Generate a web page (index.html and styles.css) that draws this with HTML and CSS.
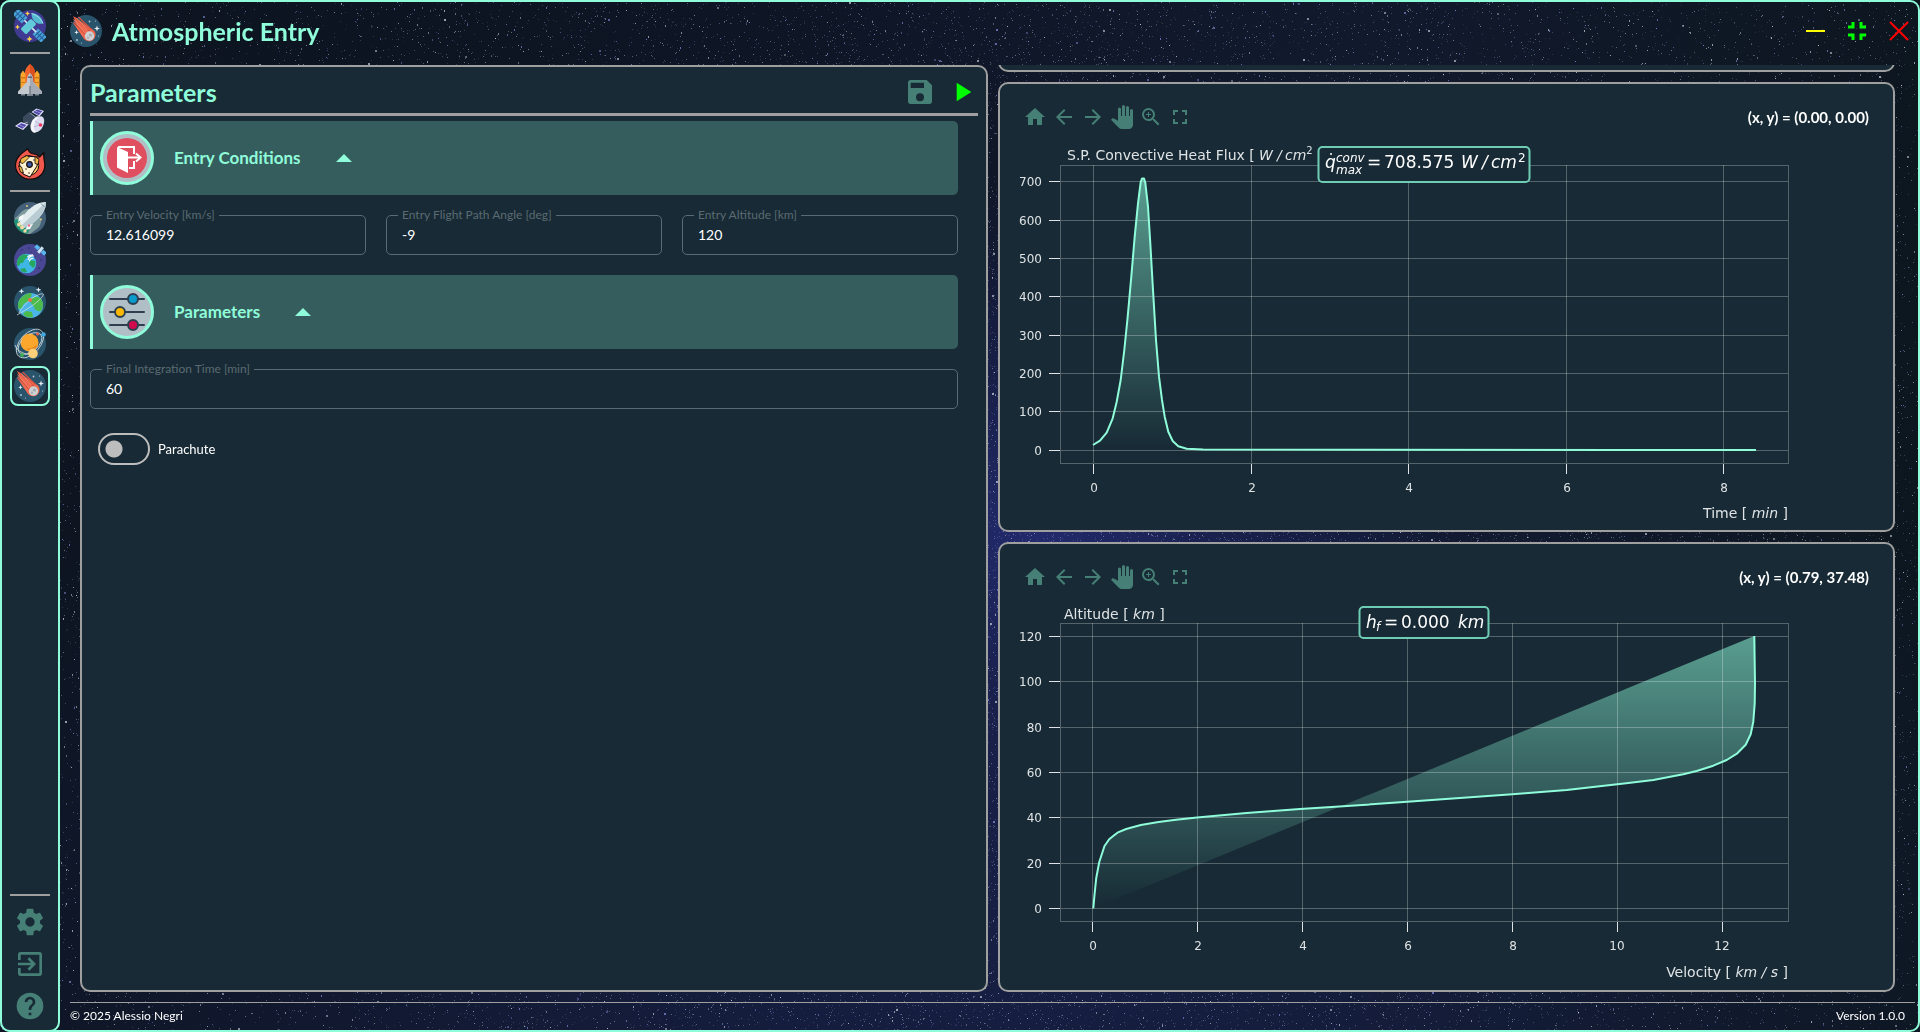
FILE: index.html
```html
<!DOCTYPE html>
<html lang="en">
<head>
<meta charset="utf-8">
<title>Atmospheric Entry</title>
<link rel="stylesheet" href="styles.css">
</head>
<body>
<canvas class="starfield" aria-hidden="true"></canvas>

<svg class="sprite" aria-hidden="true">
  <symbol id="i-comet" viewBox="0 0 32 32">
    <circle cx="16" cy="16" r="16" fill="#2a546c"/>
    <path d="M3 1 24 15.500a6.500 6.500 0 1 1-10 8.500L2.500 7l5.500 5Z" fill="#ef6a50"/>
    <path d="m5 2.500 15 14M8.500 2l13 12.500M4 7l12 13" stroke="#d4513e" stroke-width="1.200" fill="none"/>
    <path d="m6.500 3 11 12M3.500 4.500 15 18" stroke="#f98f73" stroke-width=".8" fill="none"/>
    <circle cx="19.500" cy="21" r="4.700" fill="#ccd0d3"/>
    <circle cx="20.500" cy="20" r="1.600" fill="#a6abb0"/><circle cx="18" cy="22.700" r="1.100" fill="#a6abb0"/>
    <path d="m27 10.500.8 2.200 2.200.8-2.200.8-.8 2.200-.8-2.200-2.200-.8 2.200-.8ZM6.500 15l.6 1.700 1.700.6-1.700.6-.6 1.700-.6-1.700-1.700-.6 1.700-.6Z" fill="#e3ebf0"/>
    <g fill="#b9cad4"><circle cx="19.500" cy="6.500" r=".9"/><circle cx="25.500" cy="6" r=".6"/><circle cx="7" cy="25" r=".9"/><circle cx="11.500" cy="28" r=".6"/><circle cx="28.500" cy="21" r=".6"/></g>
  </symbol>
  <symbol id="i-satellite" viewBox="0 0 32 32">
    <circle cx="16" cy="16" r="16" fill="#403a92"/>
    <g transform="rotate(45 16 16)">
      <rect x="-4.500" y="12" width="13" height="8" fill="#4aa3d8"/>
      <path d="M-4.500 16h13M-1.200 12v8M2 12v8M5.300 12v8" stroke="#245c97" fill="none"/>
      <rect x="23.500" y="12" width="12" height="8" fill="#4aa3d8"/>
      <path d="M23.500 16h12M26.500 12v8M29.500 12v8M32.500 12v8" stroke="#245c97" fill="none"/>
      <path d="M8 16h17" stroke="#d8eef2" stroke-width="1.500"/>
    </g>
    <rect x="7" y="12.500" width="15" height="8" rx="1.500" transform="rotate(-45 14.500 16.500)" fill="#62c9d9"/>
    <path d="M17.500 3.500c4-1 11 3.500 11.500 10-5 1.500-11.500-2-11.500-10Z" fill="#52b9d0"/>
    <path d="M17.500 3.500c5 1.500 9 4.500 11.500 10" stroke="#a6e3ea" fill="none"/>
    <path d="m13.500 1 .8 1.700 1.700.8-1.700.8-.8 1.700-.8-1.700-1.700-.8 1.700-.8ZM3.500 14.500l.8 1.700 1.700.8-1.700.8-.8 1.700-.8-1.700-1.700-.8 1.700-.8ZM15.500 26l.9 2.100 2.100.9-2.100.9-.9 2.100-.9-2.100-2.100-.9 2.100-.9Z" fill="#ffd24a"/>
  </symbol>
  <symbol id="i-shuttle" viewBox="0 0 32 32">
    <path d="M16 0c4 3 5.500 7 5.500 12v15h-11V12C10.500 7 12 3 16 0Z" fill="#f2622b"/>
    <path d="M16 0c4 3 5.500 7 5.500 12v8H16Z" fill="#d84f20"/>
    <path d="M6.500 27V10L9 6.500l2.500 3.500v17ZM20.500 27V10L23 6.500l2.500 3.500v17Z" fill="#f7a52c"/>
    <path d="M6.500 13h5v1.500h-5Zm14 0h5v1.500h-5ZM6.500 18h5v1h-5Zm14 0h5v1h-5Z" fill="#cf7a1a"/>
    <path d="M16 9c2.500 2 3.200 5 3.200 9L28 27.500V30H4v-2.500L12.800 18c0-4 .7-7 3.200-9Z" fill="#c3c8cf"/>
    <path d="M16 9c2.500 2 3.200 5 3.200 9L28 27.500V30H16Z" fill="#a4abb5"/>
    <path d="M14 12.500h4v1.500h-4ZM15.500 22h1v8h-1Z" fill="#5d6570"/>
    <path d="M7 30h4v1.500H7Zm6 0h6v2h-6Zm8 0h4v1.500h-4Z" fill="#7c8590"/>
  </symbol>
  <symbol id="i-probe" viewBox="0 0 32 32">
    <path d="M9 11 15 6l9 6-7 8-8-4Z" fill="#3c4a60"/>
    <path d="m16 7 8 6M6 19l8-3" stroke="#8e9bb0" fill="none"/>
    <path d="m17.500 6 5-3.500 7.500 2.500-4.500 5.500ZM1 20l6-4 7.500 2.500-5.500 5.500Z" fill="#e5e3fb"/>
    <path d="m19 6 4.200-2.500 5 1.700-3.400 4ZM3 20l4.200-2.800 5.300 1.800-4 3.700Z" fill="#4c46a8"/>
    <path d="m20.800 4.800 6 2.400M5 18.500l5.200 2.700" stroke="#b8b4ee" stroke-width=".7"/>
    <ellipse cx="22.500" cy="18.500" rx="5.500" ry="8.500" transform="rotate(22 22.500 18.500)" fill="#f5f5fc"/>
    <ellipse cx="25" cy="18" rx="4.500" ry="8.200" transform="rotate(22 25 18)" fill="#dcdcf0"/>
    <path d="m21 15 5 3.500-6 2.500" stroke="#a9a9cf" stroke-width=".8" fill="none"/>
    <circle cx="26.500" cy="19" r="1.800" fill="#ee3560"/>
  </symbol>
  <symbol id="i-reentry" viewBox="0 0 32 32">
    <path d="M14 .8c.5 2.700 3 4.700 6 5.200 2 0 4 1 5.500 3l4.500-4.500c-1 4 .5 7.500.8 12 .3 8.500-6 14.700-14.300 14.700S1.500 25 1.500 17.500C1.500 9 8 5 14 .8Z" fill="#f0584d" stroke="#140a0a" stroke-width="1.200" stroke-linejoin="round"/>
    <circle cx="15" cy="17.500" r="9.800" fill="#f8cf6b" stroke="#140a0a"/>
    <path d="m5 15 6-7 13 1-1 9-7 11-7-3Z" fill="#fff3d4" stroke="#140a0a" stroke-linejoin="round"/>
    <path d="m7 10.500 6-3 2 2-6 6-3-1Zm14-2 4 3-1 5-3-1ZM4.500 18l3 1 2 6-3-1Z" fill="#efb946" stroke="#140a0a" stroke-width=".8"/>
    <circle cx="15.500" cy="16.500" r="2.800" fill="#3c58a8" stroke="#140a0a" stroke-width="1.200"/>
    <g fill="#140a0a"><circle cx="12" cy="21" r=".7"/><circle cx="15" cy="25" r=".7"/><circle cx="20" cy="12" r=".7"/></g>
  </symbol>
  <symbol id="i-launch" viewBox="0 0 32 32">
    <circle cx="16" cy="16" r="16" fill="#45617a"/>
    <path d="M1 16c5-3 6-8 12-9 7-1 5 6 11 7 4 1 4 8 0 12l-8 6C7 32 0 25 1 16Z" fill="#7f9d9e"/>
    <path d="M0 18c4-2 6 0 8 3s6 1 7 5-2 6-4 5.500C5 30 0 24 0 18Z" fill="#239178"/>
    <path d="M32 0c0 8-4 14-14 22l-8 4-5-5 4-7C17 4 24 0 32 0Z" fill="#e2edf0"/>
    <path d="M32 0c0 8-4 14-14 22l-8 4-2.500-2.500Z" fill="#b9ccd4"/>
    <path d="m10 12-5 3-1 5 5-3Zm9 10-3 5-5 1 3-5Z" fill="#f3f8f9"/>
    <path d="M27 1.500 30.500 5" stroke="#6b8fa0"/>
    <g fill="#f8dba2"><circle cx="5" cy="22.500" r="2"/><circle cx="8" cy="25.500" r="2"/><circle cx="11" cy="29" r="1.700"/></g>
    <circle cx="15" cy="23.500" r="1.200" fill="#ef6d86"/>
    <g fill="#f2cf77"><circle cx="13" cy="4" r=".9"/><circle cx="27" cy="17.500" r=".9"/></g>
  </symbol>
  <symbol id="i-orbit" viewBox="0 0 32 32">
    <circle cx="16" cy="16" r="16" fill="#4a4795"/>
    <g fill="#2b2a66"><circle cx="8" cy="6" r=".8"/><circle cx="15" cy="4" r=".8"/><circle cx="27" cy="16" r=".8"/><circle cx="25" cy="24" r=".8"/><circle cx="17" cy="8" r=".6"/></g>
    <circle cx="12.500" cy="19.500" r="9.800" fill="#3fb6e6"/>
    <path d="M5 13c3-3 7-3 9-2 0 3-3 3-4 6s-3 1-4 3-1 3-3 1c-.5-3 .5-6 2-8ZM16 16l5 1c1 3 0 6-2 7l-4-4ZM6 25l5-1 2 4c-3 1-5 0-7-3Z" fill="#26a65f"/>
    <path d="M14 16a5 5 0 0 1 6-4M15.500 17.500a3 3 0 0 1 4-3M13.500 13a7 7 0 0 1 5.500-2" stroke="#f1f7fa" stroke-width="1.200" fill="none"/>
    <g transform="rotate(40 26.500 6)"><rect x="20" y="4" width="4.500" height="4" fill="#58b5ee"/><rect x="28.500" y="4" width="4.500" height="4" fill="#58b5ee"/><rect x="25" y="2.500" width="3" height="7" fill="#cbe6f7"/></g>
  </symbol>
  <symbol id="i-earth" viewBox="0 0 32 32">
    <circle cx="16" cy="16" r="16" fill="#2a546c"/>
    <circle cx="16.500" cy="19.500" r="12.500" fill="#4bb5e8"/>
    <path d="M6 13c3-4 7-6 11-6 2 3-1 4-2 7s-5 2-6 5-2 4-4.500 4C3.500 19 4 16 6 13ZM17 13c3-3 7-3 10 0 3 4 2 9 0 12-3 1-6-1-7-4s-5-4-3-8ZM12 25l6 1 1 5c-4 1-8 0-10-3Z" fill="#4cbb4c"/>
    <path d="M3 29C12 24 27 15 29.500 8.500c-1-2-8 1-13 5C11 18 7 23 5 27" stroke="#dae5e8" stroke-width=".7" fill="none"/>
    <circle cx="16" cy="14" r="2" fill="#ee6d4e"/>
    <path d="m7.500 2.500.7 2.100 2.100.7-2.100.7-.7 2.100-.7-2.100-2.100-.7 2.100-.7Zm17-1.500.7 2.100 2.100.7-2.100.7-.7 2.100-.7-2.100-2.100-.7 2.100-.7Z" fill="#e3ebf0"/>
  </symbol>
  <symbol id="i-planets" viewBox="0 0 32 32">
    <circle cx="16" cy="16" r="16" fill="#2a546c"/>
    <circle cx="15.500" cy="14.500" r="9" fill="#fba62c"/>
    <path d="M12 20c4-2 9-1 12-3-1 4-4 6.500-8.500 6.500Z" fill="#e78d20"/>
    <g fill="none" stroke="#d5dfe3" stroke-width=".8"><ellipse cx="16" cy="15.500" rx="17" ry="10" transform="rotate(-48 16 15.500)"/><ellipse cx="16" cy="15.500" rx="14" ry="8" transform="rotate(-40 16 15.500)"/><path d="M1 17c2 6 10 11 20 9"/></g>
    <circle cx="15" cy="13.500" r="7" fill="#fba62c"/>
    <circle cx="19" cy="25.500" r="4.800" fill="#fccf7a"/><circle cx="29.500" cy="6.500" r="2.300" fill="#41a7e0"/>
    <circle cx="8" cy="27" r="1.900" fill="#3fb052"/><circle cx="23.500" cy="6" r="1.500" fill="#ea5f4b"/>
  </symbol>
  <symbol id="i-gear" viewBox="0 0 24 24"><path d="M12 15.500A3.500 3.500 0 0 1 8.500 12 3.500 3.500 0 0 1 12 8.500a3.500 3.500 0 0 1 3.500 3.500 3.500 3.500 0 0 1-3.500 3.500m7.430-2.530c.04-.32.070-.64.070-.97s-.03-.66-.07-1l2.110-1.630c.19-.15.240-.42.120-.64l-2-3.460c-.12-.22-.39-.31-.61-.22l-2.490 1c-.52-.39-1.060-.73-1.690-.98l-.37-2.650A.506.506 0 0 0 14 2h-4c-.25 0-.46.180-.5.420l-.37 2.650c-.63.250-1.170.590-1.690.98l-2.490-1c-.22-.09-.49 0-.61.220l-2 3.460c-.13.220-.07.490.12.640L4.570 11c-.04.340-.07.670-.07 1s.030.650.070.970l-2.110 1.660c-.19.150-.25.420-.12.640l2 3.460c.12.220.390.300.610.220l2.490-1.010c.52.400 1.060.740 1.690.990l.370 2.650c.04.240.250.420.500.420h4c.250 0 .460-.18.500-.42l.370-2.650c.63-.26 1.170-.59 1.690-.99l2.490 1.010c.22.080.490 0 .610-.22l2-3.460c.12-.22.070-.49-.12-.64z"/></symbol>
  <symbol id="i-exit" viewBox="0 0 24 24"><path d="M10.090 15.590 11.500 17l5-5-5-5-1.410 1.410L12.670 11H3v2h9.670zM19 3H5a2 2 0 0 0-2 2v4h2V5h14v14H5v-4H3v4a2 2 0 0 0 2 2h14a2 2 0 0 0 2-2V5a2 2 0 0 0-2-2z"/></symbol>
  <symbol id="i-help" viewBox="0 0 24 24"><path d="M12 2a10 10 0 1 0 0 20 10 10 0 0 0 0-20zm1 17h-2v-2h2zm2.070-7.750-.9.920C13.450 12.900 13 13.500 13 15h-2v-.5c0-1.100.450-2.100 1.170-2.830l1.240-1.260A2 2 0 1 0 10 9H8a4 4 0 1 1 8 0c0 .880-.36 1.680-.93 2.250z"/></symbol>
  <symbol id="i-save" viewBox="0 0 24 24"><path d="M15 9H5V5h10m-3 14a3 3 0 0 1-3-3 3 3 0 0 1 3-3 3 3 0 0 1 3 3 3 3 0 0 1-3 3m5-16H5a2 2 0 0 0-2 2v14a2 2 0 0 0 2 2h14a2 2 0 0 0 2-2V7z"/></symbol>
  <symbol id="i-play" viewBox="0 0 24 24"><path d="M8 5v14l11-7z"/></symbol>
  <symbol id="i-home" viewBox="0 0 24 24"><path d="M10 20v-6h4v6h5v-8h3L12 3 2 12h3v8z"/></symbol>
  <symbol id="i-back" viewBox="0 0 24 24"><path d="M20 11H7.830l5.590-5.590L12 4l-8 8 8 8 1.410-1.410L7.830 13H20z"/></symbol>
  <symbol id="i-forward" viewBox="0 0 24 24"><path d="m12 4-1.410 1.410L16.170 11H4v2h12.170l-5.580 5.590L12 20l8-8z"/></symbol>
  <symbol id="i-pan" viewBox="0 0 24 24"><path d="M23 5.500V20c0 2.200-1.800 4-4 4h-7.300c-1.080 0-2.100-.43-2.850-1.190L1 14.830s1.260-1.230 1.300-1.250c.22-.19.490-.29.790-.29.220 0 .420.060.6.160.040.010 4.310 2.460 4.310 2.460V4a1.500 1.500 0 0 1 3 0v7h1V1.500a1.500 1.500 0 0 1 3 0V11h1V2.500a1.500 1.500 0 0 1 3 0V11h1V5.500a1.500 1.500 0 0 1 3 0z"/></symbol>
  <symbol id="i-zoom" viewBox="0 0 24 24"><path d="M15.500 14h-.79l-.28-.27A6.471 6.471 0 0 0 16 9.500 6.500 6.500 0 1 0 9.500 16c1.610 0 3.090-.59 4.230-1.570l.27.280v.79l5 4.990L20.490 19zm-6 0C7.010 14 5 11.990 5 9.500S7.010 5 9.500 5 14 7.010 14 9.500 11.990 14 9.500 14zm2.500-4h-2v2H9v-2H7V9h2V7h1v2h2z"/></symbol>
  <symbol id="i-full" viewBox="0 0 24 24"><path d="M7 14H5v5h5v-2H7zm-2-4h2V7h3V5H5zm12 7h-3v2h5v-5h-2zM14 5v2h3v3h2V5z"/></symbol>
</svg>

<div class="window">
  <nav class="rail" aria-label="Modules">
    <a class="rail-item" href="#home" aria-label="Home"><svg><use href="#i-satellite"/></svg></a>
    <hr>
    <a class="rail-item" href="#vehicle" aria-label="Vehicle"><svg><use href="#i-shuttle"/></svg></a>
    <a class="rail-item" href="#spacecraft" aria-label="Spacecraft"><svg><use href="#i-probe"/></svg></a>
    <a class="rail-item" href="#capsule" aria-label="Capsule"><svg><use href="#i-reentry"/></svg></a>
    <hr>
    <a class="rail-item" href="#launch" aria-label="Launch"><svg><use href="#i-launch"/></svg></a>
    <a class="rail-item" href="#orbit" aria-label="Orbit"><svg><use href="#i-orbit"/></svg></a>
    <a class="rail-item" href="#transfer" aria-label="Transfer"><svg><use href="#i-earth"/></svg></a>
    <a class="rail-item" href="#interplanetary" aria-label="Interplanetary"><svg><use href="#i-planets"/></svg></a>
    <a class="rail-item is-current" href="#entry" aria-label="Atmospheric entry" aria-current="page"><svg><use href="#i-comet"/></svg></a>
    <div class="rail-spacer"></div>
    <hr>
    <button class="rail-item" type="button" aria-label="Settings"><svg><use href="#i-gear"/></svg></button>
    <button class="rail-item" type="button" aria-label="Exit"><svg><use href="#i-exit"/></svg></button>
    <button class="rail-item" type="button" aria-label="Help"><svg><use href="#i-help"/></svg></button>
  </nav>

  <div class="page">
    <header class="titlebar">
      <svg class="title-icon" aria-hidden="true"><use href="#i-comet"/></svg>
      <h1>Atmospheric Entry</h1>
      <div class="window-controls">
        <button class="minimize" type="button" aria-label="Minimize"><svg viewBox="0 0 32 32"><path d="M7 16h19"/></svg></button>
        <button class="restore" type="button" aria-label="Restore"><svg viewBox="0 0 32 32"><path d="M7 12h5V7M20 7v5h5M7 20h5v5M20 25v-5h5"/></svg></button>
        <button class="close" type="button" aria-label="Close"><svg viewBox="0 0 32 32"><path d="m7 7 18 18M25 7 7 25"/></svg></button>
      </div>
    </header>

    <main class="workspace">
      <section class="panel params">
        <div class="params-head">
          <h2>Parameters</h2>
          <button type="button" aria-label="Save"><svg><use href="#i-save"/></svg></button>
          <button class="run" type="button" aria-label="Run"><svg><use href="#i-play"/></svg></button>
        </div>
        <form class="params-body">
          <button class="group" type="button" aria-expanded="true">
            <svg class="group-icon" viewBox="0 0 48 48" aria-hidden="true">
              <circle cx="24" cy="24" r="20" fill="#e04f5f"/>
              <path d="m14 13 11 5v21l-11-5.500Z" fill="#fff"/>
              <path d="M15 13h16v7M31 27v7h-5M25 23.500h11" fill="none" stroke="#fff" stroke-width="2"/>
              <path d="m33 19.500 4.500 4-4.500 4" fill="none" stroke="#fff" stroke-width="2"/>
            </svg>
            <span>Entry Conditions</span>
            <svg class="caret" viewBox="0 0 16 8" aria-hidden="true"><path d="M8 0 16 8H0Z"/></svg>
          </button>
          <div class="fields">
            <fieldset><legend><label for="velocity">Entry Velocity [km/s]</label></legend><input id="velocity" type="text" value="12.616099"></fieldset>
            <fieldset><legend><label for="angle">Entry Flight Path Angle [deg]</label></legend><input id="angle" type="text" value="-9"></fieldset>
            <fieldset><legend><label for="altitude">Entry Altitude [km]</label></legend><input id="altitude" type="text" value="120"></fieldset>
          </div>
          <button class="group" type="button" aria-expanded="true">
            <svg class="group-icon" viewBox="0 0 48 48" aria-hidden="true">
              <path d="M7 11h34M7 24h34M7 37h34" stroke="#2d3e50" stroke-width="2" stroke-linecap="round"/>
              <g stroke="#2d3e50" stroke-width="2"><circle cx="30" cy="11" r="5" fill="#0a9bcb"/><circle cx="17" cy="24" r="5" fill="#fbb800"/><circle cx="30" cy="37" r="5" fill="#cf0a4d"/></g>
            </svg>
            <span>Parameters</span>
            <svg class="caret" viewBox="0 0 16 8" aria-hidden="true"><path d="M8 0 16 8H0Z"/></svg>
          </button>
          <div class="fields">
            <fieldset><legend><label for="duration">Final Integration Time [min]</label></legend><input id="duration" type="text" value="60"></fieldset>
          </div>
          <label class="switch"><input type="checkbox"><span>Parachute</span></label>
        </form>
      </section>

      <section class="plots">
        <article class="panel plot"></article>

        <article class="panel plot">
          <div class="plot-tools">
            <button type="button" aria-label="Home"><svg><use href="#i-home"/></svg></button>
            <button type="button" aria-label="Back"><svg><use href="#i-back"/></svg></button>
            <button type="button" aria-label="Forward"><svg><use href="#i-forward"/></svg></button>
            <button type="button" aria-label="Pan"><svg><use href="#i-pan"/></svg></button>
            <button type="button" aria-label="Zoom"><svg><use href="#i-zoom"/></svg></button>
            <button type="button" aria-label="Full screen"><svg><use href="#i-full"/></svg></button>
            <output>(x, y) = (0.00, 0.00)</output>
          </div>
          <svg class="chart" viewBox="0 0 893 390" role="img" aria-label="Convective heat flux over time">
            <defs><linearGradient id="fade" x1="0" y1="0" x2="0" y2="1"><stop offset="0" stop-color="#8ffcda" stop-opacity=".55"/><stop offset="1" stop-color="#8ffcda" stop-opacity="0"/></linearGradient></defs>
            <path class="area" d="M93 305 100 300.700 106.700 292.700 112.700 278.300 116.700 261.700 120.700 240 124.300 210 127.700 176.700 131.300 136.700 134.700 96.700 138 63.300 140.700 42 142 38.500H144L145.300 42.700 148 66.700 150.300 103.300 153 150 156 200 159 236.700 162 260 164.700 276.700 168.300 291.700 172.700 301 178.300 306.300 186.700 308.700 203 309.600 756 310Z"/>
            <path class="grid" d="M93.500 25V323M251.500 25V323M408.500 25V323M566.500 25V323M723.500 25V323M61 41.500H788M61 80.500H788M61 118.500H788M61 156.500H788M61 195.500H788M61 233.500H788M61 271.500H788M61 310.500H788"/>
            <rect class="frame" x="60.500" y="25.500" width="728" height="298"/>
            <path class="ticks" d="M93.500 324v10M251.500 324v10M408.500 324v10M566.500 324v10M723.500 324v10M49 41.500h11M49 80.500h11M49 118.500h11M49 156.500h11M49 195.500h11M49 233.500h11M49 271.500h11M49 310.500h11"/>
            <path class="curve" d="M93 305 100 300.700 106.700 292.700 112.700 278.300 116.700 261.700 120.700 240 124.300 210 127.700 176.700 131.300 136.700 134.700 96.700 138 63.300 140.700 42 142 38.500H144L145.300 42.700 148 66.700 150.300 103.300 153 150 156 200 159 236.700 162 260 164.700 276.700 168.300 291.700 172.700 301 178.300 306.300 186.700 308.700 203 309.600 756 310"/>
            <g class="tick-y"><text x="42" y="46">700</text><text x="42" y="85">600</text><text x="42" y="123">500</text><text x="42" y="161">400</text><text x="42" y="200">300</text><text x="42" y="238">200</text><text x="42" y="276">100</text><text x="42" y="315">0</text></g>
            <g class="tick-x"><text x="94" y="352">0</text><text x="252" y="352">2</text><text x="409" y="352">4</text><text x="567" y="352">6</text><text x="724" y="352">8</text></g>
            <text class="axis" x="67" y="20">S.P. Convective Heat Flux [ <tspan class="math" x="259">W</tspan> <tspan class="math" x="277">/</tspan> <tspan class="math" x="285">cm</tspan><tspan class="small" dy="-6">2</tspan></text>
            <text class="axis end" x="788" y="378">Time [ <tspan class="math">min</tspan> ]</text>
            <rect class="badge" x="318.500" y="7" width="211" height="35" rx="4"/>
            <circle class="dot" cx="331" cy="14" r="1"/>
            <text class="peak"><tspan class="math" x="325" y="28">q</tspan><tspan class="math sup" x="336" y="22">conv</tspan><tspan class="math sup" x="336" y="34">max</tspan><tspan x="367" y="28">=</tspan><tspan x="384">708.575</tspan><tspan class="math" x="461">W</tspan><tspan class="math" x="482">/</tspan><tspan class="math" x="491">cm</tspan><tspan class="sup" x="518" y="22">2</tspan></text>
          </svg>
        </article>

        <article class="panel plot">
          <div class="plot-tools">
            <button type="button" aria-label="Home"><svg><use href="#i-home"/></svg></button>
            <button type="button" aria-label="Back"><svg><use href="#i-back"/></svg></button>
            <button type="button" aria-label="Forward"><svg><use href="#i-forward"/></svg></button>
            <button type="button" aria-label="Pan"><svg><use href="#i-pan"/></svg></button>
            <button type="button" aria-label="Zoom"><svg><use href="#i-zoom"/></svg></button>
            <button type="button" aria-label="Full screen"><svg><use href="#i-full"/></svg></button>
            <output>(x, y) = (0.79, 37.48)</output>
          </div>
          <svg class="chart" viewBox="0 0 893 390" role="img" aria-label="Altitude over velocity">
            <path class="area" d="M93.300 308.300 94.500 295 96.200 278.300 99.200 262.300 104.500 246 109.200 239.300 117.400 232.700 126.200 229 140.800 225 158.500 222 176 219.700 197 217.500 246.500 212.900 300 209 343.300 206.300 407.300 201.700 512.300 194.300 566.700 190 617.300 184.300 653.300 180 683.300 174.300 696.700 171 713.300 165.700 726.700 160 737.300 153.300 745.700 144.700 750.700 134.300 753.300 121.700 754.700 103.300 755 83.300 754.300 36Z"/>
            <path class="grid" d="M92.500 23V321M197.500 23V321M302.500 23V321M407.500 23V321M512.500 23V321M617.500 23V321M722.500 23V321M61 36.500H788M61 81.500H788M61 127.500H788M61 172.500H788M61 217.500H788M61 263.500H788M61 308.500H788"/>
            <rect class="frame" x="60.500" y="23.500" width="728" height="298"/>
            <path class="ticks" d="M92.500 322v10M197.500 322v10M302.500 322v10M407.500 322v10M512.500 322v10M617.500 322v10M722.500 322v10M49 36.500h11M49 81.500h11M49 127.500h11M49 172.500h11M49 217.500h11M49 263.500h11M49 308.500h11"/>
            <path class="curve" d="M93.300 308.300 94.500 295 96.200 278.300 99.200 262.300 104.500 246 109.200 239.300 117.400 232.700 126.200 229 140.800 225 158.500 222 176 219.700 197 217.500 246.500 212.900 300 209 343.300 206.300 407.300 201.700 512.300 194.300 566.700 190 617.300 184.300 653.300 180 683.300 174.300 696.700 171 713.300 165.700 726.700 160 737.300 153.300 745.700 144.700 750.700 134.300 753.300 121.700 754.700 103.300 755 83.300 754.300 36"/>
            <g class="tick-y"><text x="42" y="41">120</text><text x="42" y="86">100</text><text x="42" y="132">80</text><text x="42" y="177">60</text><text x="42" y="222">40</text><text x="42" y="268">20</text><text x="42" y="313">0</text></g>
            <g class="tick-x"><text x="93" y="350">0</text><text x="198" y="350">2</text><text x="303" y="350">4</text><text x="408" y="350">6</text><text x="513" y="350">8</text><text x="617" y="350">10</text><text x="722" y="350">12</text></g>
            <text class="axis" x="64" y="19">Altitude [ <tspan class="math">km</tspan> ]</text>
            <text class="axis end" x="788" y="377">Velocity [ <tspan class="math">km / s</tspan> ]</text>
            <rect class="badge" x="359.500" y="7" width="129" height="31" rx="4"/>
            <text class="peak"><tspan class="math" x="366" y="28">h</tspan><tspan class="math sup" x="376" y="31">f</tspan><tspan x="384" y="28">=</tspan><tspan x="401">0.000</tspan><tspan class="math" x="458">km</tspan></text>
          </svg>
        </article>
      </section>
    </main>

    <footer class="statusbar"><span>© 2025 Alessio Negri</span><span>Version 1.0.0</span></footer>
  </div>
</div>
<script src="stars.js"></script>
</body>
</html>
```
FILE: styles.css
```css
:root {
  --mint: #8ffcda;
  --panel: #172a35;
  --line: #9f9f9f;
  --muted: #467f75;
}

* { box-sizing: border-box; }

body {
  margin: 0;
  background: #0f1724;
  color: #fff;
  font: 14px/18px Lato, "Liberation Sans", sans-serif;
}

button {
  display: block;
  padding: 0;
  border: 0;
  background: none;
  color: inherit;
  font: inherit;
}

svg { display: block; fill: currentColor; }

h1, h2 { margin: 0; color: var(--mint); font-size: 25px; line-height: 32px; }

.sprite { position: absolute; width: 0; height: 0; }

.starfield {
  position: fixed;
  inset: 0;
  z-index: -1;
  width: 100%;
  height: 100%;
  background:
    radial-gradient(ellipse 22% 34% at 54% 52%, #222a6c 0%, #1b2255b0 45%, #14193000 100%),
    radial-gradient(ellipse 60% 60% at 52% 88%, #171f45 0%, #17204500 100%),
    linear-gradient(100deg, #0d1520 0%, #0d1422 25%, #11192d 65%, #0c161d 97%);
}

.window {
  display: flex;
  height: 100vh;
  border: solid var(--mint);
  border-width: 2px 2px 2px 0;
  border-radius: 10px;
}

/* Navigation rail */
.rail {
  display: flex;
  flex: none;
  flex-direction: column;
  align-items: center;
  gap: 2px;
  width: 60px;
  margin: -2px 0;
  padding: 4px 0;
  border: 2px solid var(--mint);
  border-radius: 10px;
  background: var(--panel);
  color: var(--muted);
}

.rail hr { width: 40px; height: 2px; margin: 4px 0; border: 0; background: var(--line); }

.rail-item {
  display: grid;
  place-items: center;
  width: 40px;
  height: 40px;
  border: 2px solid transparent;
  border-radius: 8px;
  color: inherit;
}

.rail-item svg { width: 32px; height: 32px; }
.rail-item.is-current { border-color: var(--mint); }
.rail-spacer { flex: 1; }

/* Page frame */
.page { display: flex; flex: 1; flex-direction: column; min-width: 0; padding: 0 3px 0 10px; }

.titlebar { display: flex; align-items: center; height: 63px; padding-bottom: 6px; }
.title-icon { width: 32px; height: 32px; margin-right: 10px; }

.window-controls { display: flex; gap: 10px; margin-left: auto; }
.window-controls svg { width: 32px; height: 32px; fill: none; stroke: currentColor; stroke-width: 2; }
.minimize { color: #ff0; }
.restore { color: #0f0; }
.restore svg { stroke-width: 3; }
.close { color: #f00; }

.workspace {
  display: grid;
  flex: 1;
  grid-template-rows: minmax(0, 1fr);
  grid-template-columns: 908fr 897fr;
  gap: 10px;
  min-height: 0;
  padding: 0 20px 0 10px;
}

.panel { border: 2px solid var(--line); border-radius: 10px; background: var(--panel); }

.statusbar {
  display: flex;
  justify-content: space-between;
  margin-top: 10px;
  padding: 4px 10px 5px 0;
  border-top: 1px solid var(--line);
  font-size: 12px;
}

/* Parameters */
.params { min-width: 0; padding: 9px 8px; }

.params-head {
  display: flex;
  align-items: center;
  gap: 10px;
  padding-bottom: 5px;
  border-bottom: 3px solid var(--line);
  color: var(--muted);
}

.params-head h2 { flex: 1; }
.params-head svg { width: 32px; height: 32px; }
.run { color: #0f0; }

.params-body { padding: 5px 20px 0 0; }

.group {
  display: flex;
  align-items: center;
  width: 100%;
  height: 74px;
  padding-left: 7px;
  border-left: 3px solid var(--mint);
  border-radius: 0 5px 5px 0;
  background: #365d5d;
  color: var(--mint);
  font-size: 17px;
  font-weight: 700;
}

.group-icon {
  width: 54px;
  height: 54px;
  margin-right: 20px;
  border: 3px solid var(--mint);
  border-radius: 50%;
  background: #b0bec5;
}

.caret { width: 16px; height: 8px; margin-left: 35px; }

.fields { display: flex; gap: 20px; padding: 12px 0 20px; }

fieldset {
  flex: 1;
  min-width: 0;
  height: 48px;
  margin: 0;
  padding: 0 11px;
  border: 1px solid #5b6a72;
  border-radius: 5px;
}

legend { height: 16px; padding: 0 4px; color: #5b6a72; font-size: 12px; line-height: 16px; }

fieldset input {
  display: block;
  width: 100%;
  height: 22px;
  padding: 0 4px;
  border: 0;
  background: none;
  color: #fff;
  font: inherit;
}

.switch { display: inline-flex; align-items: center; gap: 8px; margin: 4px 8px; font-size: 13px; }

.switch input {
  width: 52px;
  height: 32px;
  margin: 0;
  border: 2px solid #bdbdbd;
  border-radius: 16px;
  appearance: none;
  background: radial-gradient(circle at 14px 14px, #bdbdbd 8px, transparent 9px);
}

/* Plots */
.plots {
  display: flex;
  flex-direction: column;
  justify-content: flex-end;
  gap: 10px;
  min-width: 0;
  overflow: hidden;
}

.plot { flex: none; height: calc((100% - 27px) / 2); }

.plot-tools { display: flex; gap: 5px; padding: 21px 24px 11px 23px; color: var(--muted); }
.plot-tools svg { width: 24px; height: 24px; }
.plot-tools output { margin-left: auto; color: #fff; font-size: 15px; font-weight: 700; line-height: 24px; }

.chart { width: 100%; height: calc(100% - 56px); fill: #dfe3e5; font-family: "DejaVu Sans", sans-serif; }
.area { fill: url(#fade); }
.grid, .frame { fill: none; stroke: #fff; stroke-opacity: .27; }
.ticks { fill: none; stroke: #dfe3e5; }
.curve { fill: none; stroke: var(--mint); stroke-width: 2; stroke-linejoin: round; }
.tick-y, .tick-x { font-size: 12px; }
.tick-y { text-anchor: end; }
.tick-x { text-anchor: middle; }
.axis { font-size: 14px; }
.end { text-anchor: end; }
.math { font-style: italic; }
.small { font-size: 10px; }
.badge { fill: var(--panel); stroke: #70cdb5; stroke-width: 2; }
.dot { fill: #fff; }
.peak { fill: #fff; font-size: 17px; }
.sup { font-size: 12px; }
```
FILE: stars.js
```js
// Star field behind the window, thicker around the Milky Way core.
const canvas = document.querySelector(".starfield");
const ctx = canvas.getContext("2d");
let seed = 7;

function random() {
  seed = (seed * 1664525 + 1013904223) % 4294967296;
  return seed / 4294967296;
}

function star(x, y, alpha, width, height) {
  const tint = random() < 0.4 ? "130,140,215" : "200,205,215";
  ctx.fillStyle = `rgba(${tint},${alpha})`;
  ctx.fillRect(Math.round(x), Math.round(y), width, height);
}

function draw() {
  const w = canvas.width = innerWidth;
  const h = canvas.height = innerHeight;
  seed = 7;
  for (let i = 0; i < w * h / 90; i++) {
    star(random() * w, random() * h, 0.15 + random() * random() * 0.8, 1, 1);
  }
  for (let i = 0; i < w * h / 900; i++) {
    star(random() * w, random() * h, 0.3 + random() * 0.45, 1, 2);
  }
  for (let i = 0; i < w * h / 3000; i++) {
    star(random() * w, random() * h, 0.35 + random() * 0.4, 2, 2);
  }
  for (let i = 0; i < 60000; i++) {
    const spreadX = (random() + random() + random() - 1.5) * 0.5;
    const spreadY = (random() + random() + random() - 1.5) * 0.7;
    star((0.54 + spreadX) * w, (0.55 + spreadY) * h, 0.1 + random() * 0.4, 1, 1);
  }
}

draw();
addEventListener("resize", draw);
```
